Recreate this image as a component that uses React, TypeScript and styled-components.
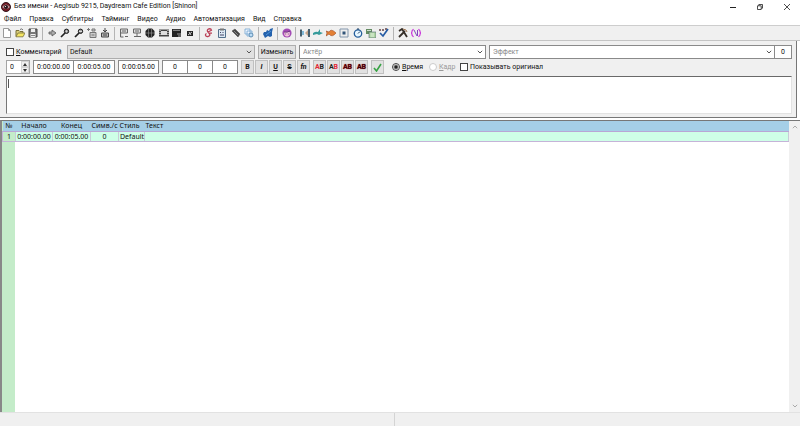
import React from "react";
import styled, { createGlobalStyle } from "styled-components";

const GlobalStyle = createGlobalStyle`
  * { box-sizing: border-box; }
  body { margin: 0; background: #fff; }
  body, button, input, select, textarea {
    font-family: Roboto, "Open Sans", sans-serif;
    font-size: 7px;
    line-height: 10px;
    color: #111;
  }
  button, input, select, textarea { margin: 0; padding: 0; border-radius: 0; outline: none; }
`;

const Window = styled.div`
  display: flex;
  flex-direction: column;
  height: 100vh;
  background: #fff;
`;

const TitleBar = styled.header`
  display: flex;
  align-items: center;
  height: 13px;
  padding-left: 1px;
  gap: 3px;
`;

const Title = styled.h1`
  flex: 1;
  margin: 0;
  font-size: 7px;
  font-weight: 400;
  line-height: 13px;
  white-space: nowrap;
`;

const WindowButtons = styled.div`
  display: flex;
`;

const WindowButton = styled.button`
  display: flex;
  align-items: center;
  justify-content: center;
  width: 27px;
  height: 13px;
  border: 0;
  background: transparent;
`;

const MenuBar = styled.nav`
  display: flex;
  height: 12px;
`;

const MenuItem = styled.button`
  border: 0;
  padding: 0 4px;
  background: transparent;
  line-height: 12px;
`;

const Toolbar = styled.div`
  display: flex;
  align-items: center;
  height: 16px;
  background: #f0f0f0;
  border-top: 1px solid #cdcdcd;
  border-bottom: 1px solid #c4c4c4;
`;

const ToolGroup = styled.div<{ $width: number }>`
  display: flex;
  width: ${(p) => p.$width}px;
  & + & {
    box-sizing: content-box;
    padding-left: 2px;
    border-left: 1px solid #b4b4b4;
    margin-left: 2px;
  }
`;

const ToolButton = styled.button`
  display: flex;
  flex: 1;
  align-items: center;
  justify-content: center;
  height: 13px;
  border: 0;
  background: transparent;
`;

const EditPanel = styled.section`
  display: flex;
  flex-direction: column;
  gap: 1px;
  margin-right: 3px;
  padding: 4px 4px 3px 6px;
  background: #f0f0f0;
  border-right: 1px solid #777;
  border-bottom: 1px solid #777;
`;

const Row = styled.div`
  display: flex;
  align-items: center;
  height: 14px;
  gap: 3px;
`;

const Joined = styled.div<{ $grow?: number }>`
  display: flex;
  flex: ${(p) => (p.$grow ? `${p.$grow} 1 0` : "none")};
  & > input + input, & > div + input { border-left-width: 0; }
`;

const CheckLabel = styled.label<{ $muted?: boolean; $width: number }>`
  display: flex;
  align-items: center;
  gap: 2px;
  width: ${(p) => p.$width}px;
  white-space: nowrap;
  color: ${(p) => (p.$muted ? "#999" : "#111")};
`;

const CheckBox = styled.input.attrs({ type: "checkbox" })`
  appearance: none;
  flex: none;
  width: 8px;
  height: 8px;
  border: 1px solid #444;
  background: #fff;
`;

const Radio = styled.input.attrs({ type: "radio" })`
  appearance: none;
  flex: none;
  width: 8px;
  height: 8px;
  border: 1px solid #444;
  border-radius: 50%;
  background: #fff;
  &:checked { background: radial-gradient(circle, #222 0 1px, #fff 3px); }
  &:disabled { border-color: #ccc; }
`;

const StyleField = styled.div`
  position: relative;
  display: flex;
  width: 188px;
  height: 14px;
`;

const StyleSelect = styled.select`
  appearance: none;
  width: 100%;
  height: 14px;
  padding: 0 12px 0 2px;
  border: 1px solid #adadad;
  background: #e1e1e1;
`;

const ComboField = styled.div<{ $grow: number }>`
  position: relative;
  display: flex;
  flex: ${(p) => p.$grow} 1 0;
  height: 14px;
`;

const ComboInput = styled.input`
  width: 100%;
  height: 14px;
  padding: 0 12px 0 3px;
  border: 1px solid #8a8a8a;
  background: #fff;
  &::placeholder { color: #888; opacity: 1; }
`;

const ChevronSlot = styled.span`
  position: absolute;
  top: 5px;
  right: 3px;
  display: flex;
  pointer-events: none;
`;

const NumberField = styled.input<{ $width: number }>`
  flex: none;
  width: ${(p) => p.$width}px;
  height: 14px;
  border: 1px solid #8a8a8a;
  background: #fff;
  text-align: center;
`;

const Spinner = styled.div`
  display: flex;
  width: 24px;
  height: 14px;
  border: 1px solid #a4a4a4;
  background: #fff;
`;

const SpinnerInput = styled.input`
  width: 14px;
  border: 0;
  padding-left: 3px;
  background: transparent;
`;

const SpinnerArrows = styled.div`
  display: flex;
  flex: 1;
  flex-direction: column;
`;

const ArrowButton = styled.button`
  display: flex;
  flex: 1;
  align-items: center;
  justify-content: center;
  border: 1px solid #d4d4d4;
  background: #f0f0f0;
`;

const PushButton = styled.button`
  width: 38px;
  height: 14px;
  border: 1px solid #adadad;
  background: #e1e1e1;
  line-height: 12px;
`;

const FormatGroup = styled.div`
  display: flex;
  gap: 1px;
`;

const FormatButton = styled.button<{ $italic?: boolean; $line?: string }>`
  display: flex;
  align-items: center;
  justify-content: center;
  width: 13px;
  height: 14px;
  border: 1px solid #c0c0c0;
  background: #e1e1e1;
  font-weight: 700;
  font-style: ${(p) => (p.$italic ? "italic" : "normal")};
  text-decoration: ${(p) => p.$line ?? "none"};
`;

const ColorLetter = styled.span<{ $color: string; $outline?: boolean }>`
  color: ${(p) => p.$color};
  text-shadow: ${(p) => (p.$outline ? "0 0 1px #a00000" : "none")};
`;

const Options = styled.div`
  display: flex;
  margin-left: 5px;
`;

const EditorFrame = styled.div`
  position: relative;
  display: flex;
  height: 38px;
  margin-top: 1px;
`;

const Editor = styled.textarea`
  width: 100%;
  height: 38px;
  resize: none;
  padding: 2px 3px;
  border: 1px solid #e3e3e3;
  border-top-color: #696969;
  border-left-color: #777;
  background: #fff;
`;

const Caret = styled.span`
  position: absolute;
  top: 3px;
  left: 2px;
  width: 1px;
  height: 9px;
  background: #555;
`;

const GridPanel = styled.main`
  display: flex;
  flex: 1;
  min-height: 0;
  margin-top: 2px;
  border-top: 1px solid #777;
  border-left: 2px solid #888;
`;

const GridBody = styled.div`
  flex: 1;
  background: linear-gradient(to right, #c4ecc9 13px, #fff 13px);
`;

const Table = styled.table`
  width: 100%;
  table-layout: fixed;
  border-collapse: collapse;
  font-family: "Noto Sans", sans-serif;
`;

const Column = styled.col<{ $width?: number }>`
  width: ${(p) => (p.$width ? `${p.$width}px` : "auto")};
`;

const HeadCell = styled.th<{ $left?: boolean }>`
  height: 10px;
  padding: 0 1px;
  background: #a5cfe7;
  border-bottom: 1px solid #b9a6d6;
  font-weight: 400;
  line-height: 10px;
  text-align: ${(p) => (p.$left ? "left" : "center")};
  white-space: nowrap;
`;

const Cell = styled.td<{ $index?: boolean; $left?: boolean }>`
  height: 10px;
  padding: 0 1px;
  background: ${(p) => (p.$index ? "#c4ecc9" : "#ceffe7")};
  border: 1px solid #c5b4d8;
  border-right-color: #c8cbd8;
  line-height: 9px;
  text-align: ${(p) => (p.$left ? "left" : "center")};
  white-space: nowrap;
`;

const ScrollBar = styled.div`
  display: flex;
  flex-direction: column;
  align-items: center;
  justify-content: space-between;
  width: 11px;
  padding: 4px 0;
  background: #f0f0f0;
`;

const StatusBar = styled.footer`
  display: flex;
  height: 14px;
  background: #f0f0f0;
  border-top: 1px solid #e2e2e2;
`;

const StatusPane = styled.div`
  flex: 1;
  & + & { border-left: 1px solid #d4d4d4; margin-right: 11px; }
`;

const Chevron = ({ up, color = "#555" }: { up?: boolean; color?: string }) => (
  <svg width="6" height="4" viewBox="0 0 6 4" fill="none" stroke={color}>
    <path d={up ? "M.8 3.2 3 1l2.2 2.2" : "M.8 .8 3 3 5.2.8"} />
  </svg>
);

const Triangle = ({ down }: { down?: boolean }) => (
  <svg width="4" height="3" viewBox="0 0 4 3">
    <path d={down ? "M0 0h4L2 3z" : "M0 3h4L2 0z"} fill="#333" />
  </svg>
);

const magnifier = (
  <>
    <path d="M1 9 5 5" stroke="#222" strokeWidth="1.7" />
    <circle cx="6.5" cy="3.3" r="2.2" fill="#777" stroke="#222" />
  </>
);

const icons: Record<string, React.ReactNode> = {
  "Новый": <path d="M1.5.5h5l2 2v7h-7zM6.5.5v2h2" fill="#fff" stroke="#999" />,
  "Открыть": (
    <>
      <path d="M1 8.5v-6h3l1 1h3v2" fill="#d9cd7a" stroke="#79703a" />
      <path d="M1 8.8 3 5h7L8 8.8z" fill="#f5e663" stroke="#79703a" strokeWidth=".8" />
      <path d="M5 1.5q2-1.5 3 .5" fill="none" stroke="#555" strokeWidth=".8" />
    </>
  ),
  "Сохранить": (
    <>
      <path d="M1 1h8v8H1z" fill="#777" stroke="#444" />
      <path d="M3 1h4v3H3zM2.5 6h5v3h-5z" fill="#eee" />
      <path d="M3 7.5h4" stroke="#888" />
    </>
  ),
  "Перейти": <path d="M2 4h3V2l4 3-4 3V6H2z" fill="#aaa" stroke="#555" strokeWidth=".8" />,
  "Приблизить": <>{magnifier}<path d="M5.2 3.3h2.6M6.5 2v2.6" stroke="#fff" strokeWidth=".5" /></>,
  "Отдалить": <>{magnifier}<path d="M5 3.3h3" stroke="#ddd" strokeWidth="1.4" /></>,
  "К началу": <path d="M1.5 0v3M0 1.5h3M3 4.5h6v5H3zM5 1h3v2H5zM4.5 7h3" fill="#ccc" stroke="#777" />,
  "К концу": <path d="M5 0v4M3 2l2 2 2-2M1.5 5h7v4h-7zM3 7h4" fill="#bbb" stroke="#444" />,
  "Начало по видео": <path d="M1.5 1h7v4h-7zM3 3h4M1.5 5v4h3M6 8.5h3" fill="#ddd" stroke="#666" />,
  "Конец по видео": <path d="M1.5 1h7v4h-7zM3 3h4M5 5v4M2 8.5h7" fill="#ddd" stroke="#666" />,
  "Выделить видимые": (
    <>
      <path d="M3 .5h4L9.5 3v4L7 9.5H3L.5 7V3z" fill="#222" />
      <path d="M3.5 1v8M6.5 1v8M1 5h8" stroke="#999" strokeWidth=".6" />
    </>
  ),
  "Привязать к сцене": <><path d="M0 1.5h10v7H0z" fill="#444" /><path d="M2 3h6v4H2z" fill="#ddd" /><path d="M1 2v6M9 2v6" stroke="#eee" strokeDasharray="1 1" /></>,
  "Сдвинуть к кадру": <><path d="M0 1h9v8H0z" fill="#222" /><path d="M1 2.3h7M5 6h4M6 8h3" stroke="#bbb" strokeWidth=".8" /></>,
  "Позиция": <><path d="M2 3h6v5H2z" fill="#222" /><path d="m3 7 4-3M4 4l2 3" stroke="#eee" strokeWidth=".8" /></>,
  "Стили": <path d="M7.5 1.5C5-.3 2 2 4 4s3 4 0 4.5S1 6 2.5 5.5M4 4l4-2M5 5.2h3" fill="none" stroke="#ba4057" strokeWidth="1.3" />,
  "Свойства": <><path d="M1.5 1.5h7v8h-7z" fill="#dce9f3" stroke="#53708c" /><path d="M3 .5h4v2H3z" fill="#777" /><path d="M3 4.5h1M5.5 4.5h1M3 7h4" stroke="#446" /></>,
  "Вложения": <><path d="m1 3 3-2 5 5-2 3z" fill="#444" stroke="#555" strokeWidth=".6" /><path d="m3 3 4 4" stroke="#999" strokeWidth=".8" /></>,
  "Автозамена": <><path d="M1 1h5v5H1zM3 3h5v5H3z" fill="#eef5ff" stroke="#71a5d0" strokeWidth=".8" /><circle cx="7" cy="7" r="2" fill="#bcdcf5" stroke="#477ba6" strokeWidth=".8" /></>,
  "Автоматизация": <><path d="M1 4h2l1-2 2 1 1-2 3-1-1 4v4L7 9 5 8 2 10 1 8 0 6z" fill="#2462ad" /><path d="m3 7 5-4" stroke="#5ba7ee" strokeWidth=".7" /></>,
  "Ассистент": <><circle cx="5" cy="5" r="4.6" fill="#a34cb5" /><path d="M2.3 4h5.4v3Q5 10 2.3 7z" fill="#f4c7df" /><path d="M2 4q3 1 6-1M3.2 6h1M5.8 6h1" stroke="#593070" strokeWidth=".8" fill="none" /></>,
  "Сдвиг времени": <><path d="M0 1.5h2v7H0zM8 1h2v8H8z" fill="#48606e" /><path d="M2 3h2v4H2z" fill="#83bad8" /><path d="m8 2-3 3 3 3z" fill="#c8a68c" /></>,
  "Стили субтитров": <path d="M0 5q3-2 5-1l2-3v3l3 1-4 2-2-1-4 1z" fill="#369b9b" />,
  "Пересчет": <path d="m0 3 3 1q2-4 7 1-4 5-7 1L0 8l1-3z" fill="#e38036" stroke="#9f4a22" strokeWidth=".6" />,
  "Разрешение": <><path d="M1 1h8v8H1z" fill="#eee" stroke="#8296ac" /><path d="M3.5 3.5h3v3h-3z" fill="#335579" /></>,
  "Тайминг": <><circle cx="5" cy="5.5" r="3.7" fill="#e7f6ff" stroke="#245d9b" strokeWidth="1.3" /><path d="M5 5.5 7 3.5M5 0v2" stroke="#17395f" /></>,
  "Перевод": <><path d="M0 1h6v5H0z" fill="#648c62" /><path d="M3 4h7v6H3z" fill="#aed6a2" stroke="#567" strokeWidth=".6" /><path d="M1 2.5h4M4.5 6H8M4.5 8H8" stroke="#fff" strokeWidth=".7" /></>,
  "Орфография": <><path d="M0 1h2v2H0zM3 1h2v2H3zM6 0h2v2H6z" fill="#876e70" /><path d="m1 5 3 3 5-7" fill="none" stroke="#255ba4" strokeWidth="1.7" /></>,
  "Настройки": <><path d="m1 9 6-6M1 3l3-2 5 8" fill="none" stroke="#352f29" strokeWidth="1.8" /><path d="m5 1 3 1 1 2" fill="none" stroke="#9d7451" /></>,
  "Теги": <><path d="M2.5 1 1 3v1L0 5l1 1v1l1.5 2M7.5 1 9 3v1l1 1-1 1v1L7.5 9" fill="none" stroke="#cb3bdb" strokeWidth="1.2" /><path d="m3 2 3 6M6.5 2v6" stroke="#8347bd" /></>,
};

const toolGroups: { width: number; items: string[] }[] = [
  { width: 40, items: ["Новый", "Открыть", "Сохранить"] },
  { width: 67, items: ["Перейти", "Приблизить", "Отдалить", "К началу", "К концу"] },
  { width: 80, items: ["Начало по видео", "Конец по видео", "Выделить видимые", "Привязать к сцене", "Сдвинуть к кадру", "Позиция"] },
  { width: 54, items: ["Стили", "Свойства", "Вложения", "Автозамена"] },
  { width: 14, items: ["Автоматизация"] },
  { width: 13, items: ["Ассистент"] },
  { width: 93, items: ["Сдвиг времени", "Стили субтитров", "Пересчет", "Разрешение", "Тайминг", "Перевод", "Орфография"] },
  { width: 27, items: ["Настройки", "Теги"] },
];

const menus = ["Файл", "Правка", "Субтитры", "Тайминг", "Видео", "Аудио", "Автоматизация", "Вид", "Справка"];

export default function App() {
  return (
    <Window>
      <GlobalStyle />
      <TitleBar>
        <svg width="10" height="10" viewBox="0 0 10 10">
          <circle cx="5" cy="5" r="4.5" fill="#741b25" stroke="#35171c" />
          <path d="M1 5q4-5 8 0-4 4-8 0" fill="#b79a9d" />
          <circle cx="5" cy="5" r="2" fill="#271016" />
          <circle cx="4.5" cy="4.5" r=".6" fill="#fff" />
        </svg>
        <Title>Без имени - Aegisub 9215, Daydream Cafe Edition [Shinon]</Title>
        <WindowButtons>
          <WindowButton aria-label="Свернуть">
            <svg width="6" height="6" viewBox="0 0 6 6"><path d="M0 3.5h6" stroke="#222" /></svg>
          </WindowButton>
          <WindowButton aria-label="Восстановить">
            <svg width="6" height="6" viewBox="0 0 6 6" fill="none" stroke="#222" strokeWidth=".8"><path d="M.5 1.8h3.7v3.7H.5zM1.8 1.8V.5h3.7v3.7H4.2" /></svg>
          </WindowButton>
          <WindowButton aria-label="Закрыть">
            <svg width="6" height="6" viewBox="0 0 6 6" stroke="#222" strokeWidth=".8"><path d="m0 0 6 6M6 0 0 6" /></svg>
          </WindowButton>
        </WindowButtons>
      </TitleBar>
      <MenuBar>
        {menus.map((m) => <MenuItem key={m}>{m}</MenuItem>)}
      </MenuBar>
      <Toolbar>
        {toolGroups.map((g) => (
          <ToolGroup key={g.items[0]} $width={g.width}>
            {g.items.map((name) => (
              <ToolButton key={name} aria-label={name}>
                <svg width="10" height="10" viewBox="0 0 10 10" fill="none">{icons[name]}</svg>
              </ToolButton>
            ))}
          </ToolGroup>
        ))}
      </Toolbar>
      <EditPanel>
        <Row>
          <CheckLabel $width={58}><CheckBox /><span><u>К</u>омментарий</span></CheckLabel>
          <StyleField>
            <StyleSelect aria-label="Стиль" defaultValue="Default"><option>Default</option></StyleSelect>
            <ChevronSlot><Chevron /></ChevronSlot>
          </StyleField>
          <PushButton>Изменить</PushButton>
          <ComboField $grow={187}>
            <ComboInput placeholder="Актёр" aria-label="Актёр" />
            <ChevronSlot><Chevron /></ChevronSlot>
          </ComboField>
          <Joined $grow={303}>
            <ComboField $grow={1}>
              <ComboInput placeholder="Эффект" aria-label="Эффект" />
              <ChevronSlot><Chevron /></ChevronSlot>
            </ComboField>
            <NumberField $width={17} defaultValue="0" aria-label="Символов" />
          </Joined>
        </Row>
        <Row>
          <Spinner>
            <SpinnerInput defaultValue="0" aria-label="Слой" />
            <SpinnerArrows>
              <ArrowButton aria-label="Больше"><Triangle /></ArrowButton>
              <ArrowButton aria-label="Меньше"><Triangle down /></ArrowButton>
            </SpinnerArrows>
          </Spinner>
          <Joined>
            <NumberField $width={41} defaultValue="0:00:00.00" aria-label="Начало" />
            <NumberField $width={41} defaultValue="0:00:05.00" aria-label="Конец" />
          </Joined>
          <NumberField $width={41} defaultValue="0:00:05.00" aria-label="Длительность" />
          <Joined>
            <NumberField $width={26} defaultValue="0" aria-label="Левый отступ" />
            <NumberField $width={25} defaultValue="0" aria-label="Правый отступ" />
            <NumberField $width={25} defaultValue="0" aria-label="Вертикальный отступ" />
          </Joined>
          <FormatGroup>
            <FormatButton>B</FormatButton>
            <FormatButton $italic>I</FormatButton>
            <FormatButton $line="underline">U</FormatButton>
            <FormatButton $line="line-through">S</FormatButton>
            <FormatButton $italic>fn</FormatButton>
          </FormatGroup>
          <FormatGroup>
            <FormatButton><ColorLetter $color="#e32636">A</ColorLetter><ColorLetter $color="#222">B</ColorLetter></FormatButton>
            <FormatButton><ColorLetter $color="#222">A</ColorLetter><ColorLetter $color="#e32636">B</ColorLetter></FormatButton>
            <FormatButton><ColorLetter $color="#500008" $outline>AB</ColorLetter></FormatButton>
            <FormatButton><ColorLetter $color="#40000a" $outline>AB</ColorLetter></FormatButton>
          </FormatGroup>
          <FormatButton aria-label="Применить">
            <svg width="9" height="9" viewBox="0 0 9 9" fill="none"><path d="m1 5 2.5 3L8 1" stroke="#37a344" strokeWidth="1.6" /></svg>
          </FormatButton>
          <Options>
            <CheckLabel $width={37}><Radio name="unit" defaultChecked /><span><u>В</u>ремя</span></CheckLabel>
            <CheckLabel $width={31} $muted><Radio name="unit" disabled /><span><u>К</u>адр</span></CheckLabel>
            <CheckLabel $width={90}><CheckBox />Показывать оригинал</CheckLabel>
          </Options>
        </Row>
        <EditorFrame>
          <Editor aria-label="Текст субтитра" />
          <Caret />
        </EditorFrame>
      </EditPanel>
      <GridPanel>
        <GridBody>
          <Table>
            <colgroup>
              <Column $width={13} /><Column $width={37} /><Column $width={38} />
              <Column $width={28} /><Column $width={26} /><Column />
            </colgroup>
            <thead>
              <tr>
                <HeadCell>№</HeadCell><HeadCell>Начало</HeadCell><HeadCell>Конец</HeadCell>
                <HeadCell>Симв./с</HeadCell><HeadCell $left>Стиль</HeadCell><HeadCell $left>Текст</HeadCell>
              </tr>
            </thead>
            <tbody>
              <tr>
                <Cell $index>1</Cell><Cell>0:00:00.00</Cell><Cell>0:00:05.00</Cell>
                <Cell>0</Cell><Cell $left>Default</Cell><Cell />
              </tr>
            </tbody>
          </Table>
        </GridBody>
        <ScrollBar>
          <Chevron up color="#aaa" />
          <Chevron color="#aaa" />
        </ScrollBar>
      </GridPanel>
      <StatusBar><StatusPane /><StatusPane /></StatusBar>
    </Window>
  );
}
